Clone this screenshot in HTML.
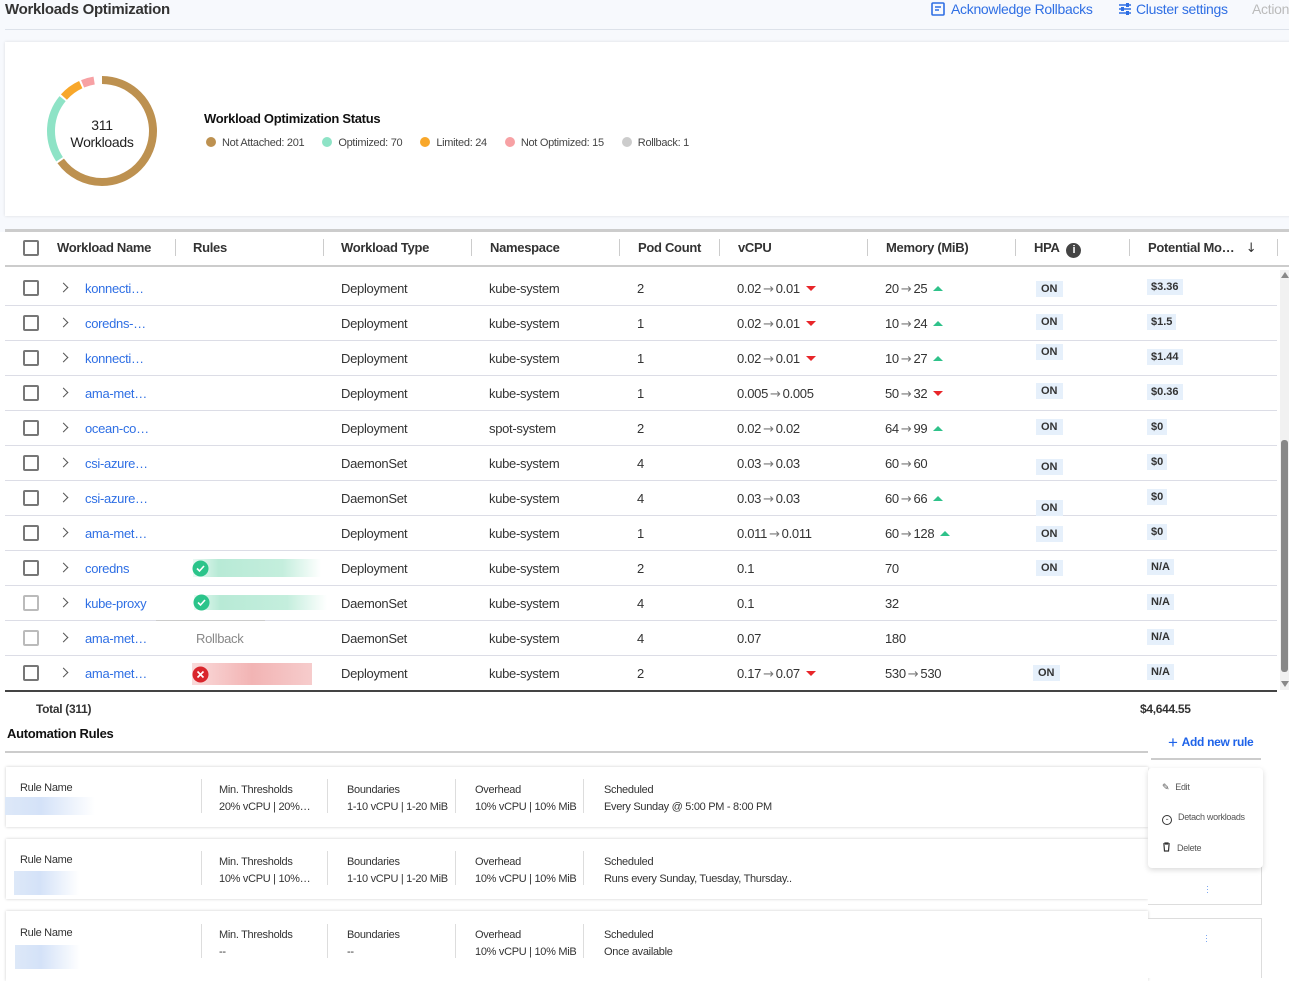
<!DOCTYPE html>
<html><head><meta charset="utf-8"><style>
*{box-sizing:border-box;margin:0;padding:0}
body{width:1289px;height:976px;overflow:hidden;background:#fff;font-family:"Liberation Sans",sans-serif;color:#333;position:relative;font-size:13px;letter-spacing:-0.3px}
.a{position:absolute;white-space:nowrap}
.top{position:absolute;left:0;top:0;width:1289px;height:232px;background:#f7f9fd}
.lnk{color:#2f6fe4}
.b{font-weight:bold}
.cb{position:absolute;width:16px;height:16px;border:2px solid #777;border-radius:2px;background:#fff}
.cb.l{border-color:#bbb}
.chev{position:absolute;width:7px;height:7px;border-right:1.5px solid #555;border-top:1.5px solid #555;transform:rotate(45deg)}
.rowline{position:absolute;left:5px;width:1272px;height:1px;background:#dcdde6}
.on{position:absolute;background:#e6f0fb;font-weight:bold;font-size:11px;color:#333;padding:2px 5px;letter-spacing:0}
.dl{position:absolute;background:#e6f0fb;font-weight:bold;font-size:11px;color:#333;padding:2px 4px;letter-spacing:0}
.dn{display:inline-block;width:0;height:0;border-left:5px solid transparent;border-right:5px solid transparent;border-top:5px solid #e8262a;margin-left:6px;vertical-align:2px}
.up{display:inline-block;width:0;height:0;border-left:5px solid transparent;border-right:5px solid transparent;border-bottom:5px solid #2fc28a;margin-left:6px;vertical-align:2px}
.r{font-family:"DejaVu Sans",sans-serif;color:#777;font-size:13px;margin:0 2px}
.hd{position:absolute;top:240px;font-weight:bold;font-size:13px;color:#333}
.vd{position:absolute;top:239px;width:1px;height:17px;background:#ccc}
.card{position:absolute;left:6px;width:1142px;height:60px;background:#fff;box-shadow:0 0 3px rgba(0,0,0,.2)}
.sep{position:absolute;width:1px;height:34px;background:#ddd}
.blur{position:absolute;background:linear-gradient(90deg,#dde8f8,#d4e2f8 40%,#fff)}
.leg{display:inline-block;width:10px;height:10px;border-radius:50%;margin-right:6px;vertical-align:-1px}
.rows .a{margin-top:1px}
</style></head><body>
<div class="top"></div>
<div class="a b" style="left:5px;top:1px;font-size:15px;color:#333">Workloads Optimization</div>
<div class="a lnk" style="left:931px;top:1px;font-size:14px"><svg width="14" height="14" viewBox="0 0 14 14" style="vertical-align:-2px;margin-right:6px"><rect x="1" y="1" width="12" height="12" rx="1" fill="none" stroke="#2f6fe4" stroke-width="1.6"/><path d="M4 5h6M4 8h4" stroke="#2f6fe4" stroke-width="1.6"/></svg>Acknowledge Rollbacks</div>
<div class="a lnk" style="left:1118px;top:1px;font-size:14px"><svg width="14" height="14" viewBox="0 0 14 14" style="vertical-align:-2px;margin-right:4px"><path d="M1 3h12M1 7h12M1 11h12" stroke="#2f6fe4" stroke-width="1.6"/><rect x="8" y="1" width="3" height="4" fill="#2f6fe4"/><rect x="3" y="5" width="3" height="4" fill="#2f6fe4"/><rect x="8" y="9" width="3" height="4" fill="#2f6fe4"/></svg>Cluster settings</div>
<div class="a" style="left:1252px;top:1px;font-size:14px;color:#bbb">Actions</div>
<div class="a" style="left:5px;top:29px;width:1284px;height:1px;background:#dde2ea"></div>
<div class="a" style="left:5px;top:42px;width:1290px;height:174px;background:#fff;box-shadow:0 0 3px rgba(0,0,0,.12)"></div>
<svg class="a" style="left:44px;top:73px" width="116" height="116" viewBox="0 0 116 116">
<g transform="rotate(-90 58 58)" fill="none" stroke-width="8">
<circle cx="58" cy="58" r="51" stroke="#bd9150" stroke-dasharray="208 113"/>
<circle cx="58" cy="58" r="51" stroke="#8ee3c6" stroke-dasharray="0 210 65 46"/>
<circle cx="58" cy="58" r="51" stroke="#f8a72a" stroke-dasharray="0 277 21 23"/>
<circle cx="58" cy="58" r="51" stroke="#f7a1a4" stroke-dasharray="0 300 12 9"/>
</g></svg>
<div class="a" style="left:62px;top:117px;width:80px;text-align:center;font-size:14px;line-height:17px;color:#222">311<br>Workloads</div>
<div class="a b" style="left:204px;top:111px;font-size:13px;color:#111">Workload Optimization Status</div>
<div class="a" style="left:206px;top:137px;font-size:11px;color:#444"><span class="leg" style="background:#bd9150"></span>Not Attached: 201<span style="margin-left:18px"></span><span class="leg" style="background:#8ee3c6"></span>Optimized: 70<span style="margin-left:18px"></span><span class="leg" style="background:#f8a72a"></span>Limited: 24<span style="margin-left:18px"></span><span class="leg" style="background:#f7a1a4"></span>Not Optimized: 15<span style="margin-left:18px"></span><span class="leg" style="background:#ccc"></span>Rollback: 1</div>

<div class="a" style="left:5px;top:229px;width:1284px;height:3px;background:#ccc"></div>
<div class="a" style="left:5px;top:232px;width:1284px;height:34px;background:#fff"></div>
<div class="a" style="left:5px;top:265px;width:1284px;height:2px;background:#ccc"></div>
<div class="cb" style="left:23px;top:240px"></div>
<div class="hd" style="left:57px">Workload Name</div><div class="vd" style="left:175px"></div>
<div class="hd" style="left:193px">Rules</div><div class="vd" style="left:323px"></div>
<div class="hd" style="left:341px">Workload Type</div><div class="vd" style="left:471px"></div>
<div class="hd" style="left:490px">Namespace</div><div class="vd" style="left:619px"></div>
<div class="hd" style="left:638px">Pod Count</div><div class="vd" style="left:719px"></div>
<div class="hd" style="left:738px">vCPU</div><div class="vd" style="left:867px"></div>
<div class="hd" style="left:886px">Memory (MiB)</div><div class="vd" style="left:1015px"></div>
<div class="hd" style="left:1034px">HPA <span style="display:inline-block;width:15px;height:15px;border-radius:50%;background:#444;color:#fff;font-size:11px;text-align:center;line-height:15px;vertical-align:-1px;margin-left:4px">i</span></div><div class="vd" style="left:1129px"></div>
<div class="hd" style="left:1148px">Potential Mo… <span style="font-weight:normal;margin-left:8px;font-family:'DejaVu Sans'">↓</span></div><div class="vd" style="left:1277px"></div>

<div class="rowline" style="top:305px"></div><div class="rowline" style="top:340px"></div><div class="rowline" style="top:375px"></div><div class="rowline" style="top:410px"></div><div class="rowline" style="top:445px"></div><div class="rowline" style="top:480px"></div><div class="rowline" style="top:515px"></div><div class="rowline" style="top:550px"></div><div class="rowline" style="top:585px"></div><div class="rowline" style="top:620px"></div><div class="rowline" style="top:655px"></div>
<div class="a" style="left:5px;top:690px;width:1272px;height:2px;background:#444"></div>

<div class="rows">
<div class="cb" style="left:23px;top:280px"></div><div class="chev" style="left:60px;top:284px"></div><div class="a lnk" style="left:85px;top:280px">konnecti…</div><div class="a" style="left:341px;top:280px">Deployment</div><div class="a" style="left:489px;top:280px">kube-system</div><div class="a" style="left:637px;top:280px">2</div><div class="a" style="left:737px;top:280px">0.02<span class="r">→</span>0.01<span class="dn"></span></div><div class="a" style="left:885px;top:280px">20<span class="r">→</span>25<span class="up"></span></div><div class="on" style="left:1036px;top:281px">ON</div><div class="dl" style="left:1147px;top:279px">$3.36</div>
<div class="cb" style="left:23px;top:315px"></div><div class="chev" style="left:60px;top:319px"></div><div class="a lnk" style="left:85px;top:315px">coredns-…</div><div class="a" style="left:341px;top:315px">Deployment</div><div class="a" style="left:489px;top:315px">kube-system</div><div class="a" style="left:637px;top:315px">1</div><div class="a" style="left:737px;top:315px">0.02<span class="r">→</span>0.01<span class="dn"></span></div><div class="a" style="left:885px;top:315px">10<span class="r">→</span>24<span class="up"></span></div><div class="on" style="left:1036px;top:314px">ON</div><div class="dl" style="left:1147px;top:314px">$1.5</div>
<div class="cb" style="left:23px;top:350px"></div><div class="chev" style="left:60px;top:354px"></div><div class="a lnk" style="left:85px;top:350px">konnecti…</div><div class="a" style="left:341px;top:350px">Deployment</div><div class="a" style="left:489px;top:350px">kube-system</div><div class="a" style="left:637px;top:350px">1</div><div class="a" style="left:737px;top:350px">0.02<span class="r">→</span>0.01<span class="dn"></span></div><div class="a" style="left:885px;top:350px">10<span class="r">→</span>27<span class="up"></span></div><div class="on" style="left:1036px;top:344px">ON</div><div class="dl" style="left:1147px;top:349px">$1.44</div>
<div class="cb" style="left:23px;top:385px"></div><div class="chev" style="left:60px;top:389px"></div><div class="a lnk" style="left:85px;top:385px">ama-met…</div><div class="a" style="left:341px;top:385px">Deployment</div><div class="a" style="left:489px;top:385px">kube-system</div><div class="a" style="left:637px;top:385px">1</div><div class="a" style="left:737px;top:385px">0.005<span class="r">→</span>0.005</div><div class="a" style="left:885px;top:385px">50<span class="r">→</span>32<span class="dn"></span></div><div class="on" style="left:1036px;top:383px">ON</div><div class="dl" style="left:1147px;top:384px">$0.36</div>
<div class="cb" style="left:23px;top:420px"></div><div class="chev" style="left:60px;top:424px"></div><div class="a lnk" style="left:85px;top:420px">ocean-co…</div><div class="a" style="left:341px;top:420px">Deployment</div><div class="a" style="left:489px;top:420px">spot-system</div><div class="a" style="left:637px;top:420px">2</div><div class="a" style="left:737px;top:420px">0.02<span class="r">→</span>0.02</div><div class="a" style="left:885px;top:420px">64<span class="r">→</span>99<span class="up"></span></div><div class="on" style="left:1036px;top:419px">ON</div><div class="dl" style="left:1147px;top:419px">$0</div>
<div class="cb" style="left:23px;top:455px"></div><div class="chev" style="left:60px;top:459px"></div><div class="a lnk" style="left:85px;top:455px">csi-azure…</div><div class="a" style="left:341px;top:455px">DaemonSet</div><div class="a" style="left:489px;top:455px">kube-system</div><div class="a" style="left:637px;top:455px">4</div><div class="a" style="left:737px;top:455px">0.03<span class="r">→</span>0.03</div><div class="a" style="left:885px;top:455px">60<span class="r">→</span>60</div><div class="on" style="left:1036px;top:459px">ON</div><div class="dl" style="left:1147px;top:454px">$0</div>
<div class="cb" style="left:23px;top:490px"></div><div class="chev" style="left:60px;top:494px"></div><div class="a lnk" style="left:85px;top:490px">csi-azure…</div><div class="a" style="left:341px;top:490px">DaemonSet</div><div class="a" style="left:489px;top:490px">kube-system</div><div class="a" style="left:637px;top:490px">4</div><div class="a" style="left:737px;top:490px">0.03<span class="r">→</span>0.03</div><div class="a" style="left:885px;top:490px">60<span class="r">→</span>66<span class="up"></span></div><div class="on" style="left:1036px;top:500px">ON</div><div class="dl" style="left:1147px;top:489px">$0</div>
<div class="cb" style="left:23px;top:525px"></div><div class="chev" style="left:60px;top:529px"></div><div class="a lnk" style="left:85px;top:525px">ama-met…</div><div class="a" style="left:341px;top:525px">Deployment</div><div class="a" style="left:489px;top:525px">kube-system</div><div class="a" style="left:637px;top:525px">1</div><div class="a" style="left:737px;top:525px">0.011<span class="r">→</span>0.011</div><div class="a" style="left:885px;top:525px">60<span class="r">→</span>128<span class="up"></span></div><div class="on" style="left:1036px;top:526px">ON</div><div class="dl" style="left:1147px;top:524px">$0</div>
<div class="cb" style="left:23px;top:560px"></div><div class="chev" style="left:60px;top:564px"></div><div class="a lnk" style="left:85px;top:560px">coredns</div><div class="a" style="left:193px;top:558px;width:128px;height:18px;background:linear-gradient(90deg,#eafaf4,#b8ead6 20%,#c4eedd 70%,#fff)"></div><svg class="a" style="left:192px;top:559px" width="17" height="17"><circle cx="8.5" cy="8.5" r="8" fill="#2bc48a"/><path d="M5 8.5l2.5 2.5 4.5-5" stroke="#fff" stroke-width="1.6" fill="none"/></svg><div class="a" style="left:341px;top:560px">Deployment</div><div class="a" style="left:489px;top:560px">kube-system</div><div class="a" style="left:637px;top:560px">2</div><div class="a" style="left:737px;top:560px">0.1</div><div class="a" style="left:885px;top:560px">70</div><div class="on" style="left:1036px;top:560px">ON</div><div class="dl" style="left:1147px;top:559px">N/A</div>
<div class="cb l" style="left:23px;top:595px"></div><div class="chev" style="left:60px;top:599px"></div><div class="a lnk" style="left:85px;top:595px">kube-proxy</div><div class="a" style="left:194px;top:594px;width:133px;height:15px;background:linear-gradient(90deg,#eafaf4,#b8ead6 20%,#c4eedd 70%,#fff)"></div><div class="a" style="left:156px;top:619px;width:109px;height:1px;background:#ccc"></div><svg class="a" style="left:193px;top:593px" width="17" height="17"><circle cx="8.5" cy="8.5" r="8" fill="#2bc48a"/><path d="M5 8.5l2.5 2.5 4.5-5" stroke="#fff" stroke-width="1.6" fill="none"/></svg><div class="a" style="left:341px;top:595px">DaemonSet</div><div class="a" style="left:489px;top:595px">kube-system</div><div class="a" style="left:637px;top:595px">4</div><div class="a" style="left:737px;top:595px">0.1</div><div class="a" style="left:885px;top:595px">32</div><div class="dl" style="left:1147px;top:594px">N/A</div>
<div class="cb l" style="left:23px;top:630px"></div><div class="chev" style="left:60px;top:634px"></div><div class="a lnk" style="left:85px;top:630px">ama-met…</div><div class="a" style="left:196px;top:630px;color:#888">Rollback</div><div class="a" style="left:341px;top:630px">DaemonSet</div><div class="a" style="left:489px;top:630px">kube-system</div><div class="a" style="left:637px;top:630px">4</div><div class="a" style="left:737px;top:630px">0.07</div><div class="a" style="left:885px;top:630px">180</div><div class="dl" style="left:1147px;top:629px">N/A</div>
<div class="cb" style="left:23px;top:665px"></div><div class="chev" style="left:60px;top:669px"></div><div class="a lnk" style="left:85px;top:665px">ama-met…</div><div class="a" style="left:192px;top:662px;width:120px;height:22px;background:linear-gradient(90deg,#fadada,#f2b4b4 50%,#f6cccc)"></div><svg class="a" style="left:192px;top:665px" width="17" height="17"><circle cx="8.5" cy="8.5" r="8" fill="#d9262c"/><path d="M5.5 5.5l6 6M11.5 5.5l-6 6" stroke="#fff" stroke-width="1.6"/></svg><div class="a" style="left:341px;top:665px">Deployment</div><div class="a" style="left:489px;top:665px">kube-system</div><div class="a" style="left:637px;top:665px">2</div><div class="a" style="left:737px;top:665px">0.17<span class="r">→</span>0.07<span class="dn"></span></div><div class="a" style="left:885px;top:665px">530<span class="r">→</span>530</div><div class="on" style="left:1033px;top:665px">ON</div><div class="dl" style="left:1147px;top:664px">N/A</div>
</div>

<div class="a" style="left:1280px;top:270px;width:9px;height:420px;background:#f1f1f1"></div>
<div class="a" style="left:1281px;top:440px;width:7px;height:232px;background:#888;border-radius:3px"></div>
<div class="a" style="left:1281px;top:272px;width:0;height:0;border-left:4px solid transparent;border-right:4px solid transparent;border-bottom:6px solid #888"></div>
<div class="a" style="left:1281px;top:681px;width:0;height:0;border-left:4px solid transparent;border-right:4px solid transparent;border-top:6px solid #888"></div>

<div class="a b" style="left:36px;top:702px;font-size:12px">Total (311)</div>
<div class="a b" style="left:1140px;top:702px;font-size:12px">$4,644.55</div>
<div class="a b" style="left:7px;top:726px;font-size:13px;color:#111">Automation Rules</div>
<div class="a" style="left:5px;top:751px;width:1143px;height:2px;background:#ccc"></div>
<div class="a b lnk" style="left:1168px;top:733px;font-size:12px;color:#1e63e9"><span style="font-size:17px;font-weight:normal;vertical-align:-2px;margin-right:4px">+</span>Add new rule</div>
<div class="a" style="left:1151px;top:758px;width:110px;height:2px;background:#ccc"></div>

<div class="card" style="top:767px"></div>
<div class="card" style="top:839px"></div>
<div class="card" style="top:911px;height:70px"></div>
<div class="a" style="left:1148px;top:860px;width:114px;height:45px;background:#fff;border-right:1px solid #ddd;border-bottom:1px solid #ddd"></div>
<div class="a" style="left:1148px;top:918px;width:114px;height:60px;background:#fff;border-right:1px solid #ddd;border-top:1px solid #ddd"></div>
<div class="a" style="left:1206px;top:885px;color:#6b9cf0;font-size:9px;line-height:3px">·<br>·<br>·</div>
<div class="a" style="left:1205px;top:934px;color:#6b9cf0;font-size:9px;line-height:3px">·<br>·<br>·</div>

<div class="a" style="left:20px;top:782px;font-size:11px">Rule Name</div><div class="blur" style="left:5px;top:797px;width:90px;height:18px"></div>
<div class="a" style="left:20px;top:854px;font-size:11px">Rule Name</div><div class="blur" style="left:14px;top:871px;width:65px;height:24px"></div>
<div class="a" style="left:20px;top:927px;font-size:11px">Rule Name</div><div class="blur" style="left:15px;top:945px;width:65px;height:24px"></div>
<div class="sep" style="left:201px;top:779px"></div><div class="sep" style="left:327px;top:779px"></div><div class="sep" style="left:455px;top:779px"></div><div class="sep" style="left:583px;top:779px"></div>
<div class="sep" style="left:201px;top:851px"></div><div class="sep" style="left:327px;top:851px"></div><div class="sep" style="left:455px;top:851px"></div><div class="sep" style="left:583px;top:851px"></div>
<div class="sep" style="left:201px;top:924px"></div><div class="sep" style="left:327px;top:924px"></div><div class="sep" style="left:455px;top:924px"></div><div class="sep" style="left:583px;top:924px"></div>
<div class="a" style="left:219px;top:782px;font-size:11px;line-height:17px">Min. Thresholds<br>20% vCPU | 20%…</div>
<div class="a" style="left:347px;top:782px;font-size:11px;line-height:17px">Boundaries<br>1-10 vCPU | 1-20 MiB</div>
<div class="a" style="left:475px;top:782px;font-size:11px;line-height:17px">Overhead<br>10% vCPU | 10% MiB</div>
<div class="a" style="left:604px;top:782px;font-size:11px;line-height:17px">Scheduled<br>Every Sunday @ 5:00 PM - 8:00 PM</div>
<div class="a" style="left:219px;top:854px;font-size:11px;line-height:17px">Min. Thresholds<br>10% vCPU | 10%…</div>
<div class="a" style="left:347px;top:854px;font-size:11px;line-height:17px">Boundaries<br>1-10 vCPU | 1-20 MiB</div>
<div class="a" style="left:475px;top:854px;font-size:11px;line-height:17px">Overhead<br>10% vCPU | 10% MiB</div>
<div class="a" style="left:604px;top:854px;font-size:11px;line-height:17px">Scheduled<br>Runs every Sunday, Tuesday, Thursday..</div>
<div class="a" style="left:219px;top:927px;font-size:11px;line-height:17px">Min. Thresholds<br>--</div>
<div class="a" style="left:347px;top:927px;font-size:11px;line-height:17px">Boundaries<br>--</div>
<div class="a" style="left:475px;top:927px;font-size:11px;line-height:17px">Overhead<br>10% vCPU | 10% MiB</div>
<div class="a" style="left:604px;top:927px;font-size:11px;line-height:17px">Scheduled<br>Once available</div>

<div class="a" style="left:1148px;top:768px;width:115px;height:100px;background:#fff;border-radius:4px;box-shadow:0 2px 6px rgba(0,0,0,.15)"></div>
<div class="a" style="left:1162px;top:782px;font-size:9px;color:#555"><span style="margin-right:6px">✎</span>Edit</div>
<div class="a" style="left:1162px;top:812px;font-size:9px;color:#555"><span style="display:inline-block;width:10px;height:10px;border:1.3px solid #333;border-radius:50%;vertical-align:-2px;margin-right:6px;text-align:center;line-height:6px;font-size:9px">-</span>Detach workloads</div>
<div class="a" style="left:1162px;top:842px;font-size:9px;color:#555"><svg width="9" height="10" style="vertical-align:-1px;margin-right:6px"><path d="M1 2h7M3 2V1h3v1M2 3l.5 6h4L7 3" stroke="#333" fill="none" stroke-width="1.2"/></svg>Delete</div>
</body></html>
